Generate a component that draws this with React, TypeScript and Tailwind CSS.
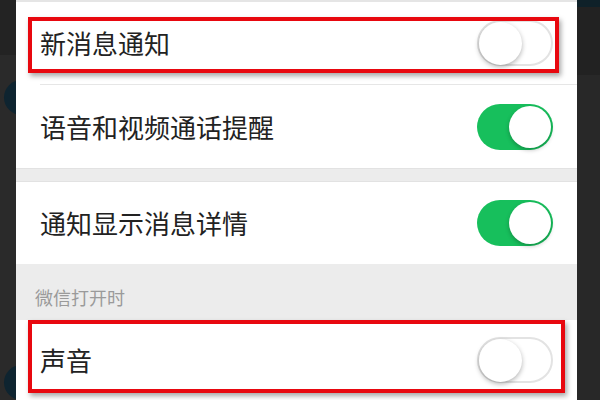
import React from "react"

const font = { fontFamily: '"Noto Sans CJK SC", "Noto Sans", sans-serif' }

const Toggle = ({ on }: { on: boolean }) =>
    on ? (
        <div className="flex h-[46px] w-[76px] items-center justify-end rounded-full bg-[#17bf5c] p-[2px]">
            <div className="h-[42px] w-[42px] rounded-full bg-white shadow-[0_2px_4px_rgba(0,0,0,0.25)]" />
        </div>
    ) : (
        <div className="flex h-[46px] w-[76px] items-center justify-start rounded-full border-[2px] border-[#e3e3e3] bg-white">
            <div className="h-[43px] w-[43px] rounded-full bg-white shadow-[0_2px_5px_rgba(0,0,0,0.3)]" />
        </div>
    )

const Row = ({
    label,
    on,
    height,
    children,
}: {
    label: string
    on: boolean
    height: string
    children?: React.ReactNode
}) => (
    <div className={`relative flex items-center justify-between bg-white pl-[24px] pr-[24px] ${height}`}>
        <span className="text-[26px] leading-none text-[#222]">{label}</span>
        <Toggle on={on} />
        {children}
    </div>
)

export default function App() {
    return (
        <div className="flex h-[400px] w-[600px] overflow-hidden" style={font}>
            {/* left dimmed strip */}
            <div className="flex w-[16px] flex-col overflow-hidden">
                <div className="h-[75px] bg-[#232323]" />
                <div className="flex-1 bg-[#2a2a2a]">
                    <div className="ml-[4px] mt-[25px] h-[35px] w-[35px] rounded-full bg-[#0e2430]" />
                    <div className="ml-[4px] mt-[250px] h-[35px] w-[35px] rounded-full bg-[#0e2430]" />
                </div>
            </div>

            {/* settings panel */}
            <div className="flex flex-1 flex-col bg-white">
                <div className="h-[2px] bg-[#e5e5e5]" />
                <Row label="新消息通知" on={false} height="h-[82px]">
                    <div className="absolute left-[12px] top-[15px] h-[56px] w-[531px] border-[4px] border-[#e8080f] shadow-[2px_3px_5px_rgba(0,0,0,0.35)]" />
                </Row>
                <div className="ml-[24px] h-px bg-[#e6e6e6]" />
                <Row label="语音和视频通话提醒" on={true} height="h-[83px]" />
                <div className="h-[14px] border-y border-[#e2e2e2] bg-[#ececec]" />
                <Row label="通知显示消息详情" on={true} height="h-[82px]" />
                <div className="flex h-[56px] items-end bg-[#ececec] pb-[14px] pl-[19px]">
                    <span className="text-[18px] leading-none text-[#9a9a9a]">微信打开时</span>
                </div>
                <Row label="声音" on={false} height="h-[80px]">
                    <div className="absolute left-[12px] top-0 h-[73px] w-[537px] border-[4px] border-[#e8080f] shadow-[2px_3px_5px_rgba(0,0,0,0.35)]" />
                </Row>
            </div>

            {/* right dimmed strip */}
            <div className="flex w-[23px] flex-col">
                <div className="h-[7px] bg-[#0f2129]" />
                <div className="h-[68px] bg-[#222]" />
                <div className="flex-1 bg-[#282828]" />
            </div>
        </div>
    )
}
